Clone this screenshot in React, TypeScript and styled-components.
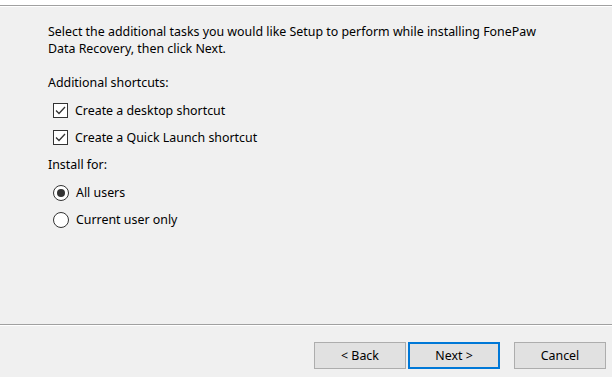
import React from "react";
import styled, { createGlobalStyle } from "styled-components";

const Global = createGlobalStyle`
  html, body { margin: 0; padding: 0; background: #f0f0f0; }
  body { font-family: "Noto Sans", "Liberation Sans", sans-serif; }
`;

const Window = styled.div`
  width: 612px;
  height: 377px;
  display: flex;
  flex-direction: column;
  background: #f0f0f0;
  color: #000;
  font-size: 12.4px;
  overflow: hidden;
`;

const HeaderEdge = styled.div`
  height: 5px;
  background: #ffffff;
  border-bottom: 1px solid #a0a0a0;
  box-shadow: 0 1px 0 #ffffff;
  flex: none;
`;

const Body = styled.div`
  flex: 1;
  display: flex;
  flex-direction: column;
  padding: 17px 0 0 48px;
`;

const Intro = styled.p`
  margin: 0;
  line-height: 17px;
  width: 540px;
`;

const GroupLabel = styled.div<{ $gap: number }>`
  margin-top: ${(p) => p.$gap}px;
  margin-bottom: 6px;
  line-height: 16px;
`;

const OptionRow = styled.label`
  display: flex;
  align-items: center;
  height: 27px;
  padding-left: 5px;
  gap: 7px;
`;

const CheckBox = styled.span`
  width: 15px;
  height: 15px;
  box-sizing: border-box;
  border: 1px solid #333333;
  background: #ffffff;
  display: flex;
  align-items: center;
  justify-content: center;
  flex: none;
`;

const Radio = styled.span<{ $on?: boolean }>`
  width: 16px;
  height: 16px;
  box-sizing: border-box;
  border: 1px solid #333333;
  border-radius: 50%;
  background: #ffffff;
  display: flex;
  align-items: center;
  justify-content: center;
  flex: none;
  &::after {
    content: "";
    width: 8px;
    height: 8px;
    border-radius: 50%;
    background: ${(p) => (p.$on ? "#333333" : "transparent")};
  }
`;

const Separator = styled.div`
  height: 1px;
  background: #a0a0a0;
  border-bottom: 1px solid #ffffff;
  flex: none;
`;

const Footer = styled.div`
  flex: none;
  height: 51px;
  box-sizing: border-box;
  padding: 16px 6px 0 0;
  display: flex;
  justify-content: flex-end;
  align-items: flex-start;
`;

const Button = styled.button<{ $primary?: boolean; $gapLeft?: number }>`
  width: 92px;
  height: 27px;
  box-sizing: border-box;
  margin: 0 0 0 ${(p) => p.$gapLeft ?? 0}px;
  padding: 0;
  font: inherit;
  font-size: 12.4px;
  color: #000;
  background: #e1e1e1;
  border: ${(p) => (p.$primary ? "2px solid #0078d7" : "1px solid #adadad")};
  border-radius: 0;
`;

const Check = () => (
  <svg width="11" height="9" viewBox="0 0 11 9">
    <path d="M1 4.5 L4 7.5 L10 1" fill="none" stroke="#333" strokeWidth="1.3" />
  </svg>
);

export default function App() {
  return (
    <Window>
      <Global />
      <HeaderEdge />
      <Body>
        <Intro>
          Select the additional tasks you would like Setup to perform while installing FonePaw
          <br />
          Data Recovery, then click Next.
        </Intro>
        <GroupLabel $gap={18}>Additional shortcuts:</GroupLabel>
        <OptionRow>
          <CheckBox><Check /></CheckBox>
          Create a desktop shortcut
        </OptionRow>
        <OptionRow>
          <CheckBox><Check /></CheckBox>
          Create a Quick Launch shortcut
        </OptionRow>
        <GroupLabel $gap={6}>Install for:</GroupLabel>
        <OptionRow>
          <Radio $on />
          All users
        </OptionRow>
        <OptionRow>
          <Radio />
          Current user only
        </OptionRow>
      </Body>
      <Separator />
      <Footer>
        <Button>&lt; Back</Button>
        <Button $primary $gapLeft={2}>Next &gt;</Button>
        <Button $gapLeft={14}>Cancel</Button>
      </Footer>
    </Window>
  );
}
